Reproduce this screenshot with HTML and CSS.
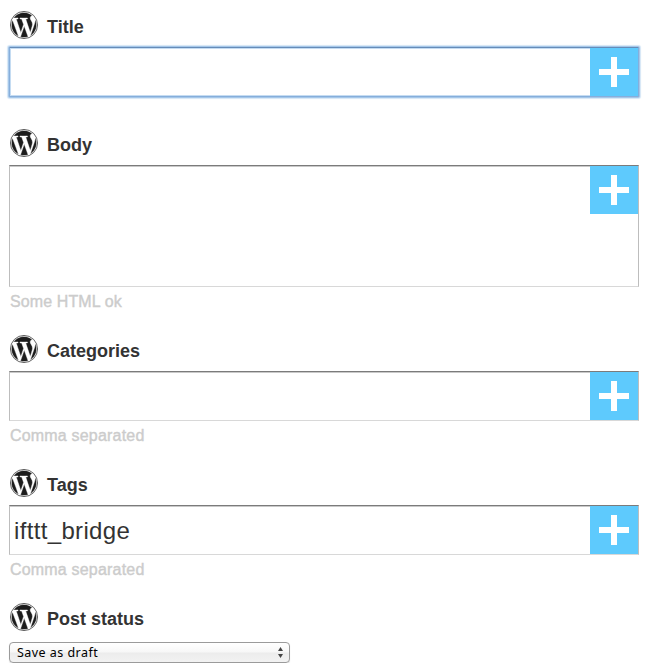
FILE: index.html
```html
<!DOCTYPE html>
<html lang="en">
<head>
<meta charset="utf-8">
<title>Action fields</title>
<link rel="stylesheet" href="styles.css">
</head>
<body>
<svg class="defs" aria-hidden="true">
  <symbol id="wp" viewBox="0 0 24 24"><path stroke="#fff" stroke-width=".35" d="M21.469 6.825c.84 1.537 1.318 3.3 1.318 5.175 0 3.979-2.156 7.456-5.363 9.325l3.295-9.527c.615-1.54.82-2.771.82-3.864 0-.405-.026-.78-.07-1.11m-7.981.105c.647-.03 1.232-.105 1.232-.105.582-.075.514-.93-.067-.899 0 0-1.755.135-2.88.135-1.064 0-2.85-.15-2.85-.15-.585-.03-.661.855-.075.885 0 0 .54.061 1.125.09l1.68 4.605-2.37 7.08L5.354 6.9c.649-.03 1.234-.1 1.234-.1.585-.075.516-.93-.065-.896 0 0-1.746.138-2.874.138-.2 0-.438-.008-.69-.015C4.911 3.15 8.235 1.215 12 1.215c2.809 0 5.365 1.072 7.286 2.833-.046-.003-.091-.009-.141-.009-1.06 0-1.812.923-1.812 1.914 0 .89.513 1.643 1.06 2.531.411.72.89 1.643.89 2.977 0 .915-.354 1.994-.821 3.479l-1.075 3.585-3.9-11.61.001.014zM12 22.784c-1.059 0-2.081-.153-3.048-.437l3.237-9.406 3.315 9.087c.024.053.05.101.078.149-1.12.393-2.325.609-3.582.609M1.211 12c0-1.564.336-3.05.935-4.39L7.29 21.709C3.694 19.96 1.212 16.271 1.211 12"/><circle cx="12" cy="12" r="11.65" fill="none" stroke="currentColor" stroke-width=".65"/></symbol>
  <symbol id="plus" viewBox="0 0 30 30"><path d="M12 0h6v12h12v6H18v12h-6V18H0v-6h12z"/></symbol>
</svg>
<form class="fields">
  <section class="field">
    <div class="label"><svg class="logo"><use href="#wp"/></svg><span class="name">Title</span></div>
    <div class="box focused"><div class="value"></div><div class="add"><svg class="plus"><use href="#plus"/></svg></div></div>
  </section>
  <section class="field">
    <div class="label"><svg class="logo"><use href="#wp"/></svg><span class="name">Body</span></div>
    <div class="box tall"><div class="value"></div><div class="add"><svg class="plus"><use href="#plus"/></svg></div></div>
    <div class="hint"><span class="html-hint">Some HTML ok</span></div>
  </section>
  <section class="field">
    <div class="label"><svg class="logo"><use href="#wp"/></svg><span class="name">Categories</span></div>
    <div class="box"><div class="value"></div><div class="add"><svg class="plus"><use href="#plus"/></svg></div></div>
    <div class="hint"><span>Comma separated</span></div>
  </section>
  <section class="field">
    <div class="label"><svg class="logo"><use href="#wp"/></svg><span class="name">Tags</span></div>
    <div class="box"><div class="value">ifttt_bridge</div><div class="add"><svg class="plus"><use href="#plus"/></svg></div></div>
    <div class="hint"><span>Comma separated</span></div>
  </section>
  <section class="field">
    <div class="label"><svg class="logo"><use href="#wp"/></svg><span class="name">Post status</span></div>
    <div class="select"><span>Save as draft</span><svg class="arrows" viewBox="0 0 5 11"><path d="M0 4L2.5 0 5 4zM0 7h5L2.5 11z"/></svg></div>
  </section>
</form>
</body>
</html>
```
FILE: styles.css
```css
* { box-sizing: border-box; }
body {
  margin: 0;
  background: #fff;
  color: #333;
  font-family: "Liberation Sans", Helvetica, Arial, sans-serif;
}
.defs { position: absolute; width: 0; height: 0; }
.fields { width: 630px; margin: 0 0 0 9px; padding-top: 11px; }
.label {
  display: flex;
  align-items: center;
  gap: 9px;
  height: 28px;
  margin: 0 0 8px 1px;
}
.logo { width: 28px; height: 28px; color: #333; fill: #1c1c1c; flex: none; }
.name { font-size: 18px; font-weight: bold; line-height: 20px; padding-top: 3px; }
.box {
  display: flex;
  align-items: flex-start;
  height: 50px;
  border: 1px solid #bdbdbd;
  border-top-color: #7b7b7b;
  border-bottom-color: #d8d8d8;
}
.box .value {
  flex: 1;
  height: 100%;
  padding: 0 4px;
  box-shadow: inset 0 1px #c9c9c9;
  font-size: 24px;
  line-height: 49px;
  letter-spacing: .34px;
}
.tall { height: 122px; }
.focused {
  border-color: #86aedb;
  border-top-color: #668cb8;
  border-radius: 1px;
  margin-bottom: 32px;
  box-shadow: 0 0 0 1px #a5c7e9, 0 0 1px 2px #d5e6f6;
}
.focused .value { box-shadow: inset 1px 1px #c5dcf2, inset 0 -1px #c5dcf2; }
.add {
  display: flex;
  align-items: center;
  justify-content: center;
  width: 48px;
  height: 48px;
  background: #5ecafd;
}
.plus { width: 30px; height: 30px; fill: #fff; }
.hint {
  height: 48px;
  padding: 5px 0 0 1px;
  color: #ccc;
  font-size: 16px;
  line-height: 20px;
  letter-spacing: .19px;
  -webkit-text-stroke: .4px #ccc;
}
.html-hint { letter-spacing: .1px; }
.select {
  display: flex;
  align-items: center;
  justify-content: space-between;
  width: 281px;
  height: 21px;
  margin-top: 11px;
  padding: 0 6px 0 7px;
  border: 1px solid #9b9b9b;
  border-radius: 4px;
  background: linear-gradient(#fff, #f7f7f7 48%, #ececec 52%, #f2f2f2);
  box-shadow: 0 1px 1px #ddd;
  color: #000;
  font: 12.5px/18px "Noto Sans", sans-serif;
  letter-spacing: .46px;
}
.arrows { width: 5px; height: 11px; fill: #444; }
```
